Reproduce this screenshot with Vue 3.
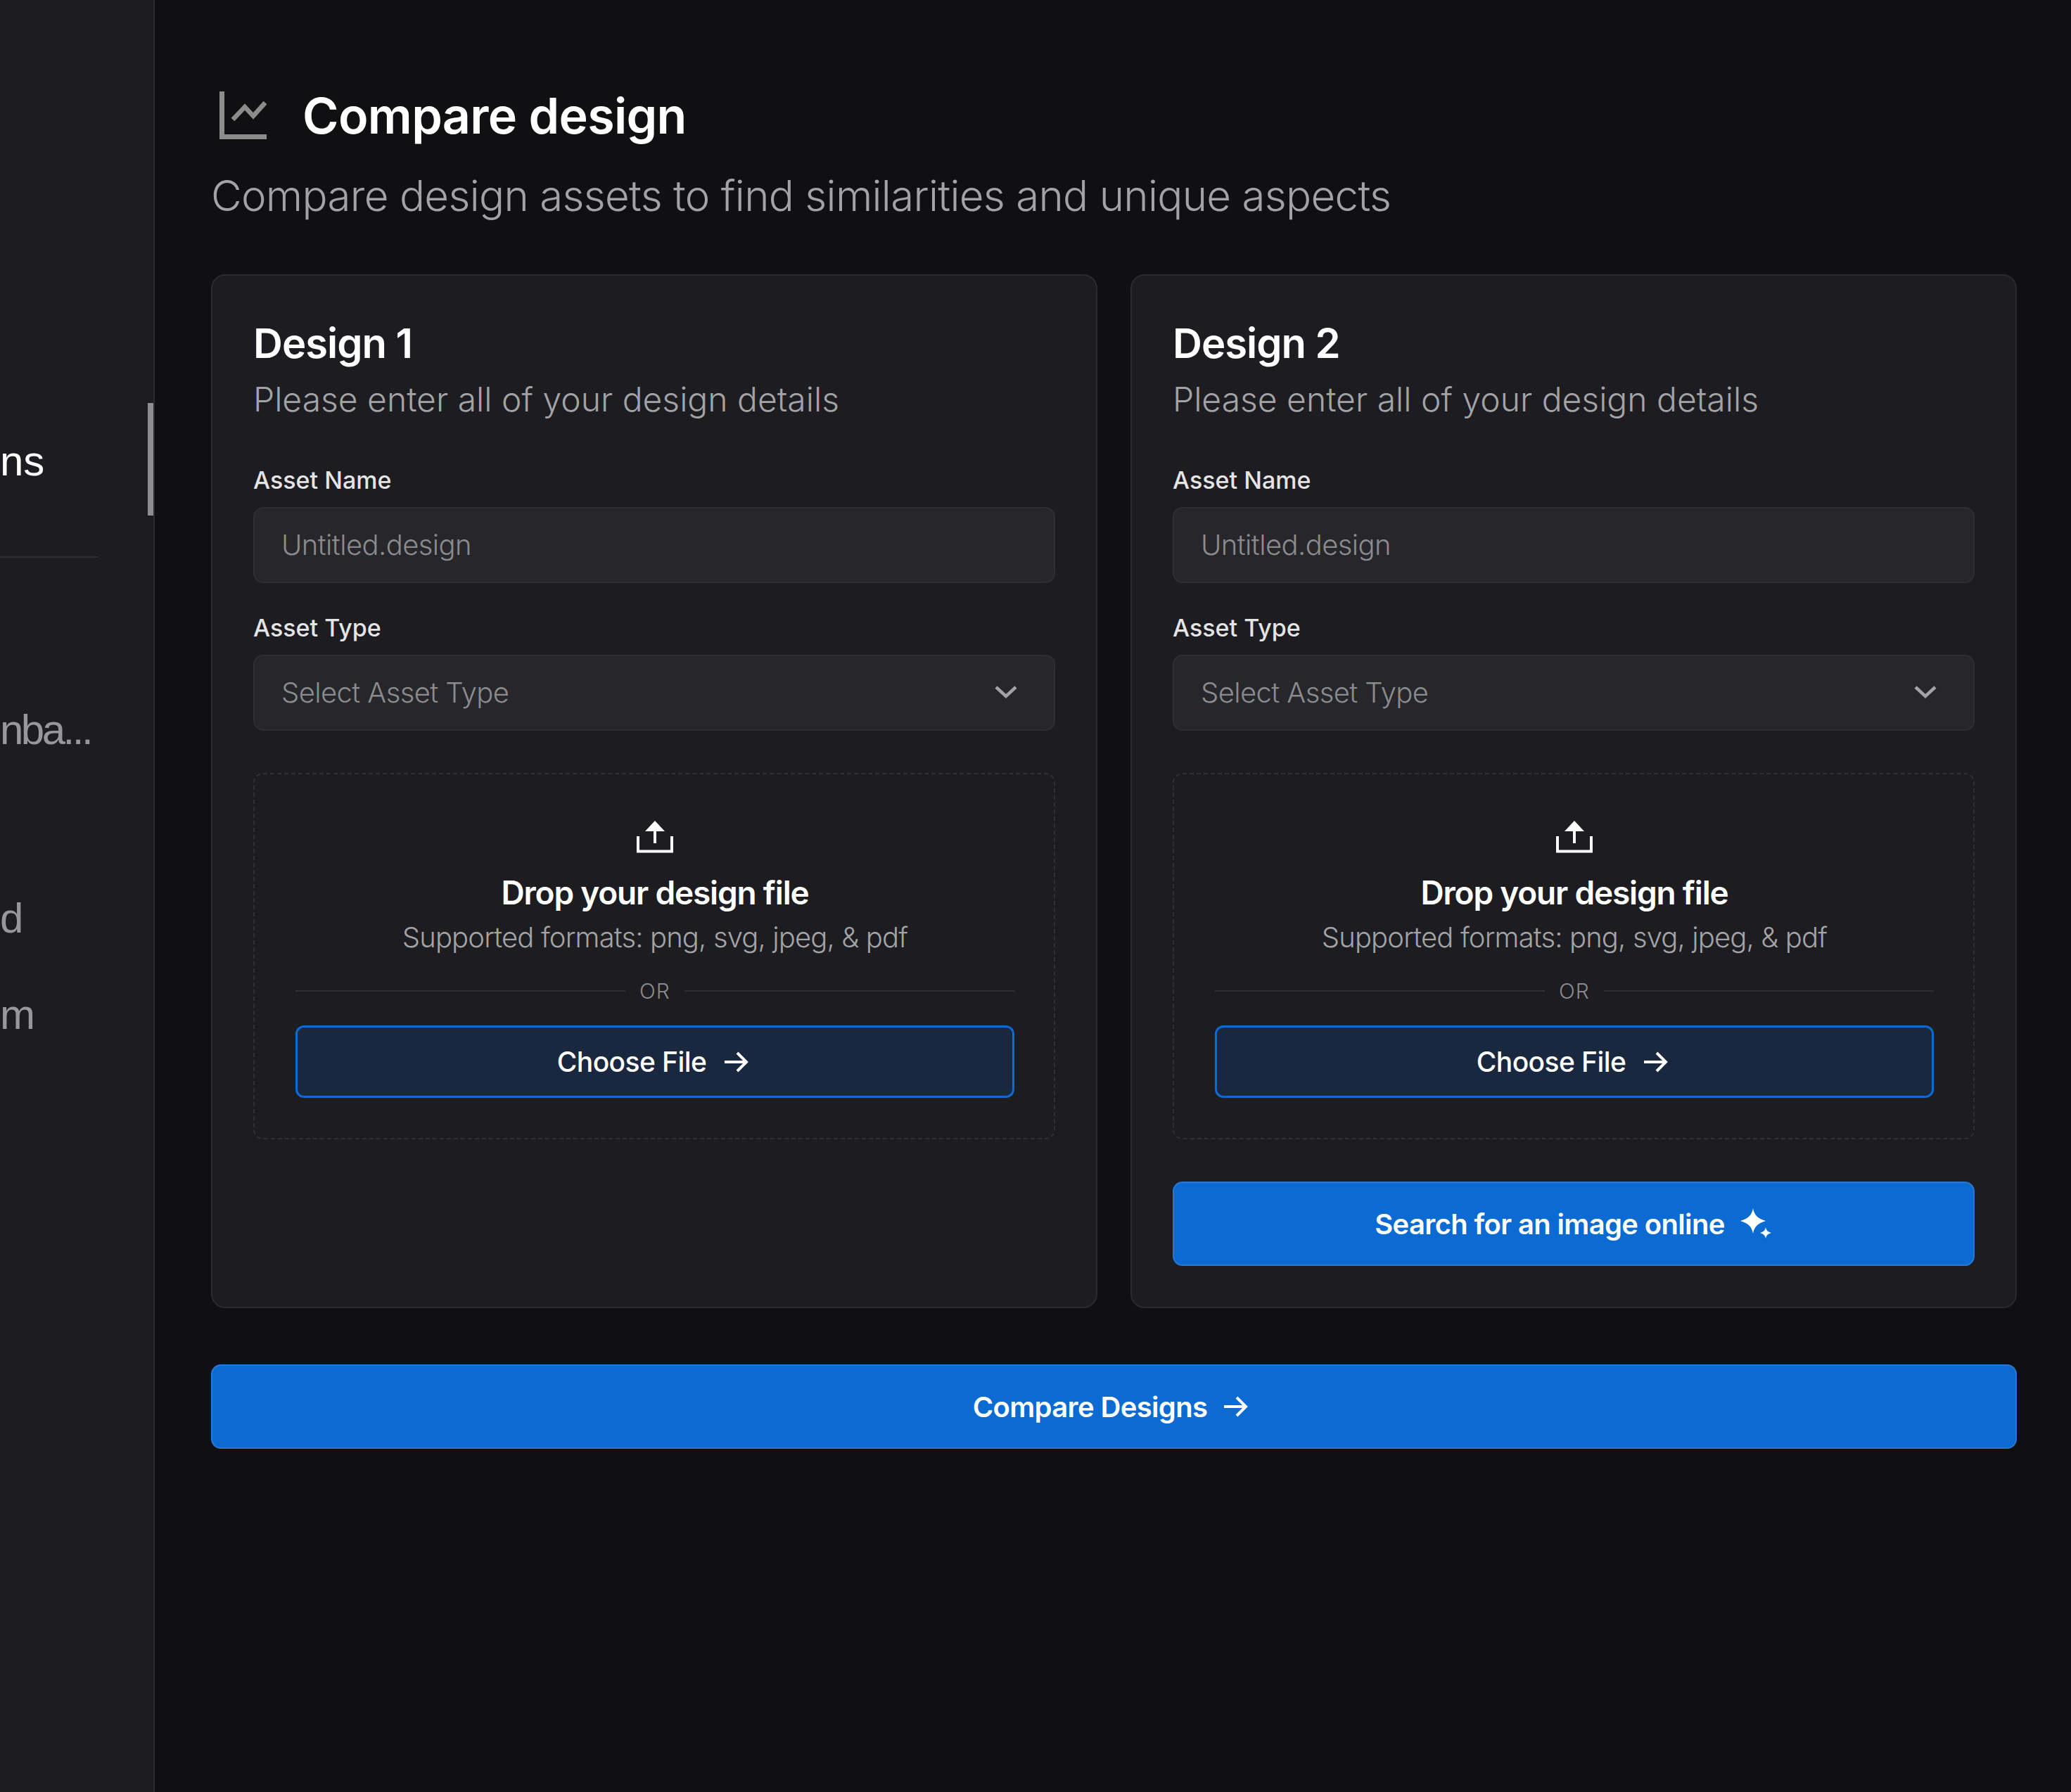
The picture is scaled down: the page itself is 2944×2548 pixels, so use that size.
<template>
  <div class="page">
    <aside class="sidebar">
      <div class="active-bar"></div>
      <div class="side-item side-item--active">ns</div>
      <div class="side-divider"></div>
      <div class="side-item side-item--one">nba...</div>
      <div class="side-item side-item--two">d</div>
      <div class="side-item side-item--three">m</div>
    </aside>

    <main class="main">
      <div class="head">
        <svg class="head-icon" width="72" height="72" viewBox="0 0 72 72" fill="none" stroke="#8c8c8c" stroke-width="7">
          <path d="M3.5 0V64.5H67" />
          <path d="M19 40L36 22L48 35L65 16" stroke-width="6.5" />
        </svg>
        <h1>Compare design</h1>
      </div>
      <p class="subtitle">Compare design assets to find similarities and unique aspects</p>

      <div class="cards">
        <section v-for="card in cards" :key="card.title" class="card">
          <h2>{{ card.title }}</h2>
          <p class="card-sub">Please enter all of your design details</p>

          <label class="label">Asset Name</label>
          <div class="field">Untitled.design</div>

          <label class="label label--type">Asset Type</label>
          <div class="field field--select">
            <span>Select Asset Type</span>
            <svg width="34" height="20" viewBox="0 0 34 20" fill="none" stroke="#a3a3a5" stroke-width="4.5">
              <path d="M3 3L17 16L31 3" />
            </svg>
          </div>

          <div class="drop">
            <svg class="upload" width="52" height="46" viewBox="0 0 52 46" fill="none">
              <path d="M26 0L40 15H12Z" fill="#fff" />
              <path d="M26 12V32M2 22V43.5H50V22" stroke="#fff" stroke-width="4" />
            </svg>
            <div class="drop-title">Drop your design file</div>
            <div class="drop-sub">Supported formats: png, svg, jpeg, &amp; pdf</div>
            <div class="or"><span>OR</span></div>
            <button class="choose">
              Choose File
              <svg width="36" height="32" viewBox="0 0 36 32" fill="none" stroke="#fff" stroke-width="4">
                <path d="M2 16H33M20 3L33 16L20 29" />
              </svg>
            </button>
          </div>

          <button v-if="card.search" class="primary primary--search">
            Search for an image online
            <svg width="46" height="44" viewBox="0 0 46 44" fill="#fff">
              <path d="M18 0C20 10 24 14 36 18C24 22 20 26 18 36C16 26 12 22 0 18C12 14 16 10 18 0Z" />
              <path d="M36 27C37 31 38 33 44 35C38 37 37 39 36 43C35 39 34 37 28 35C34 33 35 31 36 27Z" />
            </svg>
          </button>
        </section>
      </div>

      <button class="primary primary--compare">
        Compare Designs
        <svg width="36" height="32" viewBox="0 0 36 32" fill="none" stroke="#fff" stroke-width="4">
          <path d="M2 16H33M20 3L33 16L20 29" />
        </svg>
      </button>
    </main>
  </div>
</template>

<script setup>
const cards = [
  { title: 'Design 1', search: false },
  { title: 'Design 2', search: true }
];
</script>

<style>
body {
  background: #101012;
}
</style>

<style scoped>
.page {
  display: flex;
  width: 2944px;
  height: 2548px;
  background: #101012;
  color: #fff;
  font-family: Inter, "Noto Sans", sans-serif;
  overflow: hidden;
}

.sidebar {
  position: relative;
  flex: 0 0 220px;
  box-sizing: border-box;
  padding-top: 620px;
  background: #1c1c21;
  border-right: 2px solid #2b2b30;
  font-family: "Liberation Sans", sans-serif;
  font-size: 60px;
  line-height: 72px;
  color: #98989b;
}

.active-bar {
  position: absolute;
  top: 573px;
  right: 0;
  width: 8px;
  height: 160px;
  background: #8e8e90;
}

.side-item--active {
  color: #fff;
}

.side-divider {
  width: 140px;
  height: 2px;
  margin-top: 99px;
  background: #2f2f34;
}

.side-item--one {
  margin-top: 209px;
  letter-spacing: -3.5px;
}

.side-item--two {
  margin-top: 196px;
}

.side-item--three {
  margin-top: 65px;
}

.main {
  flex: 1;
  padding: 128px 77px 0 80px;
}

.head {
  display: flex;
  align-items: center;
  gap: 46px;
  height: 74px;
  padding-left: 12px;
}

.head-icon {
  flex: none;
  margin-top: 2px;
}

h1 {
  margin: 0;
  font-size: 70px;
  line-height: 74px;
  font-weight: 600;
  letter-spacing: -0.7px;
}

.subtitle {
  margin: 40px 0 0;
  font-size: 60px;
  line-height: 72px;
  font-weight: 300;
  letter-spacing: -0.7px;
  color: #a3a3a5;
}

.cards {
  display: grid;
  grid-template-columns: 1fr 1fr;
  gap: 47px;
  margin-top: 76px;
}

.card {
  box-sizing: border-box;
  height: 1470px;
  padding: 60px 58px;
  background: #1c1c21;
  border: 2px solid #2a2a2f;
  border-radius: 20px;
}

h2 {
  margin: 0;
  font-size: 58px;
  line-height: 72px;
  font-weight: 600;
  letter-spacing: -1px;
}

.card-sub {
  margin: 14px 0 0;
  font-size: 48px;
  line-height: 60px;
  font-weight: 300;
  letter-spacing: 0;
  color: #a3a3a5;
}

.label {
  display: block;
  margin-top: 63px;
  font-size: 34px;
  line-height: 44px;
  font-weight: 500;
  color: #e4e4e5;
}

.label--type {
  margin-top: 42px;
}

.field {
  display: flex;
  align-items: center;
  justify-content: space-between;
  box-sizing: border-box;
  height: 108px;
  margin-top: 16px;
  padding: 0 38px 2px;
  background: #26262b;
  border: 2px solid #2e2e33;
  border-radius: 14px;
  font-size: 40px;
  font-weight: 300;
  letter-spacing: -0.6px;
  color: #8b8b8e;
}

.field--select {
  padding-right: 51px;
}

.drop {
  display: flex;
  flex-direction: column;
  align-items: center;
  box-sizing: border-box;
  height: 521px;
  margin-top: 60px;
  padding: 66px 56px 0 58px;
  border: 2px dashed #2f2f34;
  border-radius: 14px;
}

.upload {
  flex: none;
}

.drop-title {
  margin-top: 28px;
  font-size: 46px;
  line-height: 56px;
  font-weight: 600;
  letter-spacing: -1.2px;
}

.drop-sub {
  margin-top: 10px;
  font-size: 40px;
  line-height: 52px;
  font-weight: 300;
  letter-spacing: -0.87px;
  color: #a3a3a5;
}

.or {
  display: flex;
  align-items: center;
  gap: 20px;
  width: 100%;
  margin-top: 30px;
  font-size: 30px;
  line-height: 40px;
  font-weight: 300;
  letter-spacing: 1px;
  color: #8b8b8e;
}

.or::before,
.or::after {
  content: "";
  flex: 1;
  height: 2px;
  background: #2f2f34;
}

.choose,
.primary {
  display: flex;
  align-items: center;
  justify-content: center;
  box-sizing: border-box;
  color: #fff;
  font-family: inherit;
  font-size: 40px;
}

.choose {
  flex: none;
  gap: 24px;
  width: 100%;
  height: 103px;
  margin-top: 29px;
  padding: 0 6px 0 0;
  background: #19273f;
  border: 3px solid #0b6bd3;
  border-radius: 12px;
  font-size: 39px;
  font-weight: 500;
  letter-spacing: -0.6px;
}

.primary {
  gap: 22px;
  width: 100%;
  height: 120px;
  background: #0b6bd3;
  border: 2px solid #2a77d2;
  border-radius: 14px;
  font-weight: 600;
  letter-spacing: -0.65px;
}

.primary--search {
  margin-top: 60px;
}

.primary--compare {
  margin-top: 80px;
  padding: 0 10px 0 0;
}
</style>
